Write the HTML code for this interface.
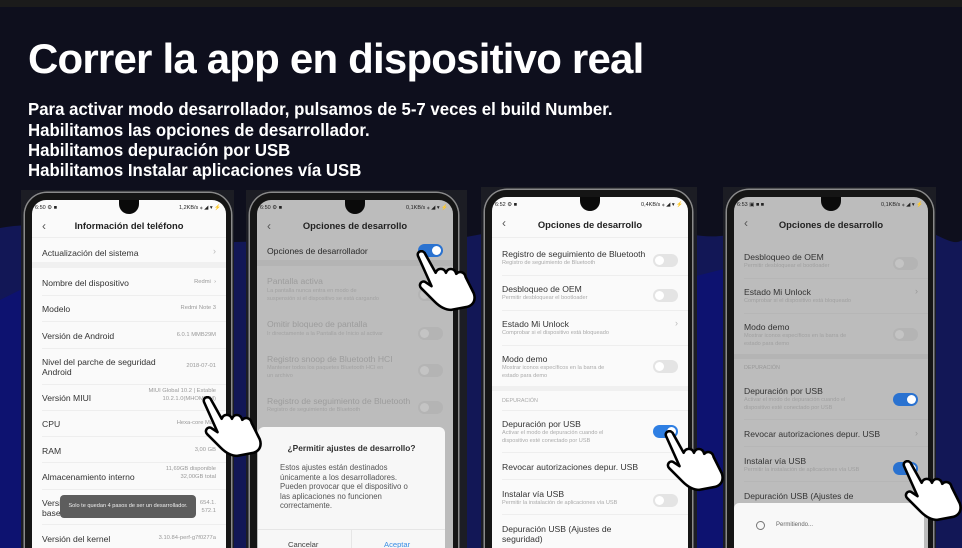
<!DOCTYPE html>
<html><head><meta charset="utf-8">
<style>
*{margin:0;padding:0;box-sizing:border-box}
body{width:962px;height:548px;overflow:hidden;background:#0e0f1d;font-family:"Liberation Sans",sans-serif;position:relative}
.top{position:absolute;left:0;top:0;width:962px;height:7px;background:#1b1b1b}
h1{position:absolute;left:28px;top:35px;color:#fff;font-size:42px;font-weight:bold;letter-spacing:-0.8px;white-space:nowrap}
.sub{position:absolute;left:28px;color:#fff;font-size:17.5px;font-weight:bold;white-space:nowrap;transform:scaleX(0.96);transform-origin:left top;line-height:20px}
.ph{position:absolute;background:#1c1d24;overflow:hidden}
.frame{position:absolute;border:7px solid #151515;border-radius:22px 22px 0 0;border-bottom:none;box-shadow:0 0 0 1.5px #8a8a8a}
.scr{position:absolute;overflow:hidden;background:#fafafa;border-radius:14px 14px 0 0;color:#333;font-size:8.6px}
.dim{background:#bcbcbc}
.notch{position:absolute;top:-2px;width:20px;height:16px;background:#0a0a0a;border-radius:0 0 10px 10px;left:50%;margin-left:-10px}
.sb{position:absolute;top:5px;left:3px;right:5px;font-size:5.5px;color:#222;display:flex;justify-content:space-between}
.hd{position:absolute;top:20px;left:0;right:0;text-align:center;font-weight:bold;font-size:9.4px;color:#222}
.bk{position:absolute;top:19px;left:10px;font-size:12px;color:#555}
.r{position:absolute;left:10px;white-space:nowrap}
.s{position:absolute;left:10px;font-size:5.6px;color:#aaa;white-space:nowrap;line-height:7.5px}
.v{position:absolute;right:10px;font-size:5.8px;color:#999;text-align:right;line-height:7.5px}
.tg{position:absolute;right:10px;width:25px;height:13px;border-radius:7px;background:#e4e4e4}
.tg::after{content:"";position:absolute;left:2px;top:2px;width:9px;height:9px;border-radius:50%;background:#fff}
.on{background:#2f7fe3}.on::after{left:14px}
.dim .tg{background:#b4b4b4}.dim .tg::after{background:#c4c4c4}
.dim .on{background:#2a72d0}.dim .on::after{background:#fff}
.sep{position:absolute;left:0;right:0;height:1px;background:#eee}
.dim .sep{background:#b6b6b6}
.band{position:absolute;left:0;right:0;background:#f0f0f0}
.dim .band{background:#b4b4b4}
.hand{position:absolute}
</style></head><body>
<div class="top"></div>
<svg style="position:absolute;left:0;top:0" width="962" height="548">
<path d="M0,228 C40,220 80,232 120,240 C200,250 300,232 420,245 C480,236 540,220 600,218 C640,214 680,240 720,236 C780,230 820,250 900,230 C930,222 950,250 962,240 L962,548 L0,548 Z" fill="#121756"/>
<path d="M0,300 L40,280 L60,548 L0,548Z M680,280 L760,260 L760,548 L680,548Z" fill="#0d1270"/>
</svg>
<h1>Correr la app en dispositivo real</h1>
<div class="sub" style="top:99px">Para activar modo desarrollador, pulsamos de 5-7 veces el build Number.</div>
<div class="sub" style="top:120px">Habilitamos las opciones de desarrollador.</div>
<div class="sub" style="top:140px">Habilitamos depuración por USB</div>
<div class="sub" style="top:160px">Habilitamos Instalar aplicaciones vía USB</div>

<!-- Phone 1 -->
<div class="ph" style="left:21px;top:190px;width:213px;height:358px">
 <div class="frame" style="left:4px;top:3px;width:206px;height:360px"></div>
 <div class="scr" style="left:11px;top:10px;width:194px;height:348px">
  <div class="sb"><span>6:50 ⚙ ■</span><span>1,2KB/s ⁎ ◢ ▾ ⚡</span></div>
  <div class="notch"></div>
  <div class="bk">‹</div><div class="hd">Información del teléfono</div>
  <div class="sep" style="top:37px"></div>
  <div class="r" style="top:48px">Actualización del sistema</div><div class="v" style="top:48px;font-size:9px;color:#bbb">›</div>
  <div class="band" style="top:62px;height:6px"></div>
  <div class="r" style="top:78px">Nombre del dispositivo</div><div class="v" style="top:79px">Redmi &nbsp;›</div>
  <div class="sep" style="top:95px;left:10px"></div>
  <div class="r" style="top:104px">Modelo</div><div class="v" style="top:105px">Redmi Note 3</div>
  <div class="sep" style="top:121px;left:10px"></div>
  <div class="r" style="top:131px">Versión de Android</div><div class="v" style="top:132px">6.0.1 MMB29M</div>
  <div class="sep" style="top:148px;left:10px"></div>
  <div class="r" style="top:157px;line-height:10px">Nivel del parche de seguridad<br>Android</div><div class="v" style="top:163px">2018-07-01</div>
  <div class="sep" style="top:184px;left:10px"></div>
  <div class="r" style="top:193px">Versión MIUI</div><div class="v" style="top:188px">MIUI Global 10.2 | Estable<br>10.2.1.0(MHOMIXM)</div>
  <div class="sep" style="top:210px;left:10px"></div>
  <div class="r" style="top:219px">CPU</div><div class="v" style="top:220px">Hexa-core Max</div>
  <div class="sep" style="top:236px;left:10px"></div>
  <div class="r" style="top:246px">RAM</div><div class="v" style="top:247px">3,00 GB</div>
  <div class="sep" style="top:262px;left:10px"></div>
  <div class="r" style="top:272px">Almacenamiento interno</div><div class="v" style="top:266px">11,69GB disponible<br>32,00GB total</div>
  <div class="sep" style="top:289px;left:10px"></div>
  <div class="r" style="top:298px;line-height:10px">Versión de la banda<br>base</div><div class="v" style="top:300px">654.1.<br>572.1</div>
  <div style="position:absolute;left:28px;top:295px;width:136px;height:23px;background:#5d5d5d;border-radius:4px;color:#eee;font-size:5.6px;line-height:23px;text-align:center">Solo te quedan 4 pasos de ser un desarrollador.</div>
  <div class="sep" style="top:324px;left:10px"></div>
  <div class="r" style="top:334px">Versión del kernel</div><div class="v" style="top:335px">3.10.84-perf-g7f0277a</div>
 </div>
</div>

<!-- Phone 2 -->
<div class="ph" style="left:246px;top:190px;width:221px;height:358px">
 <div class="frame" style="left:4px;top:3px;width:208px;height:360px"></div>
 <div class="scr dim" style="left:11px;top:10px;width:196px;height:348px;color:#2a2a2a">
  <div class="sb"><span>6:50 ⚙ ■</span><span>0,1KB/s ⁎ ◢ ▾ ⚡</span></div>
  <div class="notch"></div>
  <div class="bk">‹</div><div class="hd">Opciones de desarrollo</div>
  <div class="r" style="top:46px">Opciones de desarrollador</div><div class="tg on" style="top:44px"></div>
  <div class="band" style="top:60px;height:6px"></div>
  <div style="color:#9c9c9c">
  <div class="r" style="top:76px">Pantalla activa</div>
  <div class="s" style="top:88px;color:#a2a2a2">La pantalla nunca entra en modo de<br>suspensión si el dispositivo se está cargando</div>
  <div class="tg" style="top:88px"></div>
  <div class="r" style="top:119px">Omitir bloqueo de pantalla</div>
  <div class="s" style="top:131px;color:#a2a2a2">Ir directamente a la Pantalla de Inicio al activar</div>
  <div class="tg" style="top:127px"></div>
  <div class="r" style="top:154px">Registro snoop de Bluetooth HCI</div>
  <div class="s" style="top:165px;color:#a2a2a2">Mantener todos los paquetes Bluetooth HCI en<br>un archivo</div>
  <div class="tg" style="top:164px"></div>
  <div class="r" style="top:196px">Registro de seguimiento de Bluetooth</div>
  <div class="s" style="top:207px;color:#a2a2a2">Registro de seguimiento de Bluetooth</div>
  <div class="tg" style="top:201px"></div>
  </div>
  <div style="position:absolute;left:1px;top:227px;width:187px;height:125px;background:#f7f7f7;border-radius:6px 6px 0 0">
   <div style="position:absolute;top:16px;width:100%;text-align:center;font-weight:bold;font-size:8.4px;color:#333">¿Permitir ajustes de desarrollo?</div>
   <div style="position:absolute;top:36px;left:22px;font-size:7.8px;line-height:9.6px;color:#555">Estos ajustes están destinados<br>únicamente a los desarrolladores.<br>Pueden provocar que el dispositivo o<br>las aplicaciones no funcionen<br>correctamente.</div>
   <div style="position:absolute;top:102px;left:0;right:0;height:1px;background:#e6e6e6"></div>
   <div style="position:absolute;top:102px;left:93px;width:1px;height:30px;background:#e6e6e6"></div>
   <div style="position:absolute;top:113px;left:30px;font-size:7.6px;color:#444">Cancelar</div>
   <div style="position:absolute;top:113px;left:126px;font-size:7.6px;color:#3a8ee6">Aceptar</div>
  </div>
 </div>
</div>

<!-- Phone 3 -->
<div class="ph" style="left:481px;top:187px;width:216px;height:361px">
 <div class="frame" style="left:4px;top:3px;width:207px;height:362px"></div>
 <div class="scr" style="left:11px;top:10px;width:196px;height:351px">
  <div class="sb"><span>6:52 ⚙ ■</span><span>0,4KB/s ⁎ ◢ ▾ ⚡</span></div>
  <div class="notch"></div>
  <div class="bk">‹</div><div class="hd" style="top:22px">Opciones de desarrollo</div>
  <div class="sep" style="top:40px"></div>
  <div class="r" style="top:52px">Registro de seguimiento de Bluetooth</div>
  <div class="s" style="top:63px">Registro de seguimiento de Bluetooth</div><div class="tg" style="top:57px"></div>
  <div class="sep" style="top:78px;left:10px"></div>
  <div class="r" style="top:87px">Desbloqueo de OEM</div>
  <div class="s" style="top:98px">Permitir desbloquear el bootloader</div><div class="tg" style="top:92px"></div>
  <div class="sep" style="top:113px;left:10px"></div>
  <div class="r" style="top:122px">Estado Mi Unlock</div>
  <div class="s" style="top:133px">Comprobar si el dispositivo está bloqueado</div><div class="v" style="top:123px;font-size:9px;color:#bbb">›</div>
  <div class="sep" style="top:148px;left:10px"></div>
  <div class="r" style="top:157px">Modo demo</div>
  <div class="s" style="top:168px">Mostrar iconos específicos en la barra de<br>estado para demo</div><div class="tg" style="top:163px"></div>
  <div class="band" style="top:189px;height:5px"></div>
  <div class="s" style="top:201px;font-size:5.4px">DEPURACIÓN</div>
  <div class="sep" style="top:213px;left:10px"></div>
  <div class="r" style="top:222px">Depuración por USB</div>
  <div class="s" style="top:233px">Activar el modo de depuración cuando el<br>dispositivo esté conectado por USB</div><div class="tg on" style="top:228px"></div>
  <div class="sep" style="top:255px;left:10px"></div>
  <div class="r" style="top:265px">Revocar autorizaciones depur. USB</div>
  <div class="sep" style="top:282px;left:10px"></div>
  <div class="r" style="top:292px">Instalar vía USB</div>
  <div class="s" style="top:303px">Permitir la instalación de aplicaciones vía USB</div><div class="tg" style="top:297px"></div>
  <div class="sep" style="top:317px;left:10px"></div>
  <div class="r" style="top:327px;line-height:10px">Depuración USB (Ajustes de<br>seguridad)</div>
 </div>
</div>

<!-- Phone 4 -->
<div class="ph" style="left:723px;top:187px;width:213px;height:361px">
 <div class="frame" style="left:4px;top:3px;width:206px;height:362px"></div>
 <div class="scr dim" style="left:11px;top:10px;width:194px;height:351px">
  <div class="sb"><span>6:53 ▣ ■ ■</span><span>0,1KB/s ⁎ ◢ ▾ ⚡</span></div>
  <div class="notch"></div>
  <div class="bk">‹</div><div class="hd" style="top:22px">Opciones de desarrollo</div>
  <div class="r" style="top:55px">Desbloqueo de OEM</div>
  <div class="s" style="top:66px;color:#a0a0a0">Permitir desbloquear el bootloader</div><div class="tg" style="top:60px"></div>
  <div class="sep" style="top:81px;left:10px"></div>
  <div class="r" style="top:90px">Estado Mi Unlock</div>
  <div class="s" style="top:101px;color:#a0a0a0">Comprobar si el dispositivo está bloqueado</div><div class="v" style="top:91px;font-size:9px;color:#999">›</div>
  <div class="sep" style="top:116px;left:10px"></div>
  <div class="r" style="top:125px">Modo demo</div>
  <div class="s" style="top:136px;color:#a0a0a0">Mostrar iconos específicos en la barra de<br>estado para demo</div><div class="tg" style="top:131px"></div>
  <div class="band" style="top:157px;height:5px"></div>
  <div class="s" style="top:168px;color:#999;font-size:5.4px">DEPURACIÓN</div>
  <div class="r" style="top:189px">Depuración por USB</div>
  <div class="s" style="top:200px;color:#a0a0a0">Activar el modo de depuración cuando el<br>dispositivo esté conectado por USB</div><div class="tg on" style="top:196px"></div>
  <div class="sep" style="top:222px;left:10px"></div>
  <div class="r" style="top:232px">Revocar autorizaciones depur. USB</div><div class="v" style="top:233px;font-size:9px;color:#999">›</div>
  <div class="sep" style="top:249px;left:10px"></div>
  <div class="r" style="top:259px">Instalar vía USB</div>
  <div class="s" style="top:270px;color:#a0a0a0">Permitir la instalación de aplicaciones vía USB</div><div class="tg on" style="top:265px"></div>
  <div class="sep" style="top:284px;left:10px"></div>
  <div class="r" style="top:294px">Depuración USB (Ajustes de</div>
  <div style="position:absolute;left:0;top:306px;width:190px;height:50px;background:#f8f8f8;border-radius:5px 5px 0 0">
   <div style="position:absolute;left:22px;top:18px;width:9px;height:9px;border:1px solid #777;border-radius:50%"></div>
   <div style="position:absolute;left:42px;top:19px;font-size:6px;color:#666">Permitiendo...</div>
  </div>
 </div>
</div>

<!-- hands -->
<svg class="hand" style="left:200px;top:396px" width="66" height="62" viewBox="0 0 64 60"><path d="M4,6 C2,1 9,-1 11,4 L21,22 C23,17 29,17 31,22 C33,17 39,17 41,23 C44,20 49,21 50,26 L58,42 C60,48 58,53 52,55 L36,58 C30,58 24,54 20,50 L7,37 C4,34 7,29 11,31 L17,35 Z" fill="#fff" stroke="#000" stroke-width="2.5" stroke-linejoin="round"/></svg>
<svg class="hand" style="left:414px;top:250px" width="66" height="62" viewBox="0 0 64 60"><path d="M4,6 C2,1 9,-1 11,4 L21,22 C23,17 29,17 31,22 C33,17 39,17 41,23 C44,20 49,21 50,26 L58,42 C60,48 58,53 52,55 L36,58 C30,58 24,54 20,50 L7,37 C4,34 7,29 11,31 L17,35 Z" fill="#fff" stroke="#000" stroke-width="2.5" stroke-linejoin="round"/></svg>
<svg class="hand" style="left:662px;top:430px" width="66" height="62" viewBox="0 0 64 60"><path d="M4,6 C2,1 9,-1 11,4 L21,22 C23,17 29,17 31,22 C33,17 39,17 41,23 C44,20 49,21 50,26 L58,42 C60,48 58,53 52,55 L36,58 C30,58 24,54 20,50 L7,37 C4,34 7,29 11,31 L17,35 Z" fill="#fff" stroke="#000" stroke-width="2.5" stroke-linejoin="round"/></svg>
<svg class="hand" style="left:900px;top:460px" width="66" height="62" viewBox="0 0 64 60"><path d="M4,6 C2,1 9,-1 11,4 L21,22 C23,17 29,17 31,22 C33,17 39,17 41,23 C44,20 49,21 50,26 L58,42 C60,48 58,53 52,55 L36,58 C30,58 24,54 20,50 L7,37 C4,34 7,29 11,31 L17,35 Z" fill="#fff" stroke="#000" stroke-width="2.5" stroke-linejoin="round"/></svg>
</body></html>
